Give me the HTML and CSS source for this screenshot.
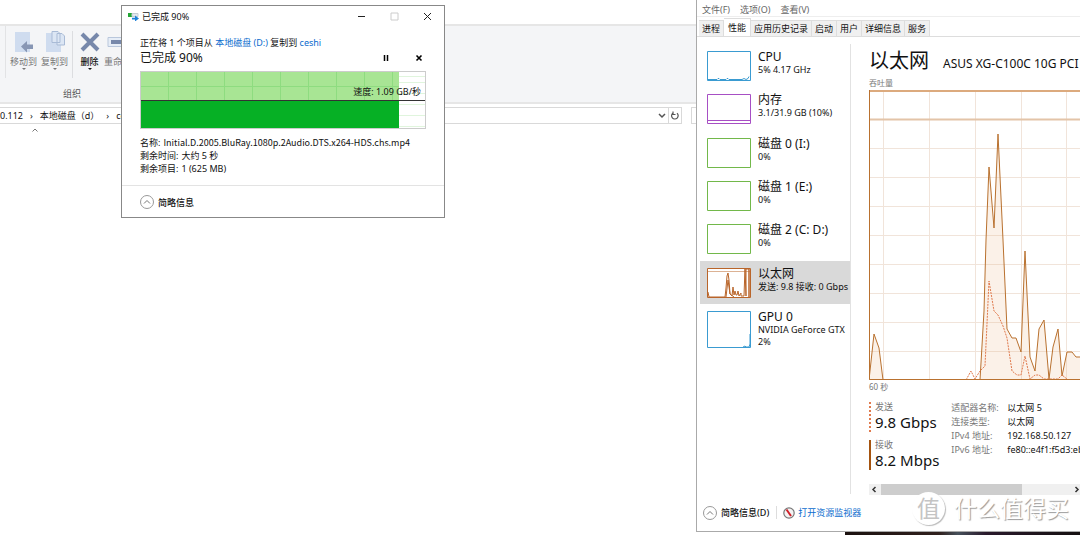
FILE: index.html
```html
<!DOCTYPE html>
<html lang="zh-CN">
<head>
<meta charset="utf-8">
<title>文件复制</title>
<link rel="stylesheet" href="styles.css">
</head>
<body>
<main class="desktop">
  <section class="explorer">
    <div class="ribbon">
      <div class="ribbon-tools">
        <button class="tool faded">
          <svg width="22" height="22" viewBox="0 0 22 22"><path d="M2 1h15v20H2z" fill="#cfdcef"/><path d="M8 15.500l6-5.500v3.500h6v4.500h-6v3.500z" fill="#8796b4"/></svg>
          <span>移动到</span><i class="caret"></i>
        </button>
        <button class="tool faded">
          <svg width="22" height="22" viewBox="0 0 22 22"><path d="M2 2h15v19H2z" fill="#cfdcef"/><path d="M8 .500h6l2 2v9H8zM13 2.500h5l2.500 2.500v9H13z" fill="#dce6f4" stroke="#a9bbd6"/></svg>
          <span>复制到</span><i class="caret"></i>
        </button>
        <button class="tool delete">
          <svg width="22" height="22" viewBox="0 0 22 22"><path d="M3 3l16 16M19 3L3 19" stroke="#7788ab" stroke-width="4"/></svg>
          <span>删除</span><i class="caret"></i>
        </button>
        <button class="tool faded rename">
          <svg width="22" height="22" viewBox="0 0 22 22"><path d="M1 6.500h20v9H1z" fill="#e6edf7" stroke="#b9c7dc"/><path d="M4 9h15v4H4z" fill="#7788ab"/></svg>
          <span>重命名</span>
        </button>
      </div>
      <div class="ribbon-title">组织</div>
    </div>
    <div class="address-row">
      <nav class="address">
        <span>0.112</span><span class="sep">›</span><span>本地磁盘（d）</span><span class="sep">›</span><span>ceshi</span>
        <button class="drop" aria-label="展开"><svg width="8" height="6" viewBox="0 0 8 6"><path d="M1 1l3 3 3-3" fill="none" stroke="#555" stroke-width="1.500"/></svg></button>
        <button class="refresh" aria-label="刷新"><svg width="10" height="10" viewBox="0 0 10 10"><path d="M7 2.200A3.300 3.300 0 1 1 3 2M3 .500V3.500H5.500" fill="none" stroke="#555" stroke-width="1.200"/></svg></button>
      </nav>
      <div class="search"></div>
    </div>
    <svg class="sort" width="6" height="4" viewBox="0 0 6 4"><path d="M.500 3.500L3 1l2.500 2.500" fill="none" stroke="#777"/></svg>
  </section>

  <section class="copy">
    <header class="copy-head">
      <svg width="12" height="8" viewBox="0 0 12 8"><path d="M0 0h4v4H0z" fill="#24a635"/><path d="M4 .500h6v3H4z" fill="#e4e8ec" stroke="#c5ccd4"/><path d="M4 4.800h3V2.500l4 3-4 3V6.500H4z" fill="#1f82d8"/></svg>
      <h2>已完成 90%</h2>
      <button aria-label="最小化"><svg width="9" height="9" viewBox="0 0 9 9"><path d="M1 4.500h7" stroke="#222"/></svg></button>
      <button aria-label="最大化"><svg width="9" height="9" viewBox="0 0 9 9"><path d="M1 1h7v7H1z" fill="none" stroke="#ccc"/></svg></button>
      <button aria-label="关闭"><svg width="9" height="9" viewBox="0 0 9 9"><path d="M1 1l7 7M8 1L1 8" stroke="#222"/></svg></button>
    </header>
    <div class="copy-body">
      <p class="route">正在将 1 个项目从 <a href="#">本地磁盘 (D:)</a> 复制到 <a href="#">ceshi</a></p>
      <div class="progress-row">
        <span>已完成 90%</span>
        <button aria-label="暂停"><svg width="8" height="8" viewBox="0 0 8 8"><path d="M2.500 1v6M5.500 1v6" stroke="#000" stroke-width="1.500"/></svg></button>
        <button aria-label="取消"><svg width="8" height="8" viewBox="0 0 8 8"><path d="M1.500 1.500l5 5M6.500 1.500l-5 5" stroke="#000" stroke-width="1.600"/></svg></button>
      </div>
      <div class="speed">
        <div class="speed-done"></div>
        <span>速度: 1.09 GB/秒</span>
      </div>
      <dl class="facts">
        <div><dt>名称:</dt><dd class="filename">Initial.D.2005.BluRay.1080p.2Audio.DTS.x264-HDS.chs.mp4</dd></div>
        <div><dt>剩余时间:</dt><dd>大约 5 秒</dd></div>
        <div><dt>剩余项目:</dt><dd>1 (625 MB)</dd></div>
      </dl>
    </div>
    <footer class="copy-foot">
      <button class="less"><svg width="14" height="14" viewBox="0 0 14 14"><circle cx="7" cy="7" r="6.500" fill="#fff" stroke="#999"/><path d="M4 8.500l3-3 3 3" fill="none" stroke="#777"/></svg>简略信息</button>
    </footer>
  </section>

  <section class="taskmgr">
    <nav class="menu"><button>文件(F)</button><button>选项(O)</button><button>查看(V)</button></nav>
    <div class="tabs" role="tablist">
      <button role="tab">进程</button><button role="tab" class="active" aria-selected="true">性能</button><button role="tab">应用历史记录</button><button role="tab">启动</button><button role="tab">用户</button><button role="tab">详细信息</button><button role="tab">服务</button>
    </div>
    <div class="panes">
      <div class="devices">
        <div class="device-list">
          <button class="device"><svg class="thumb blue" viewBox="0 0 44 30"><path d="M.500.500h43v29H.500z" class="frame"/><path d="M1 28.500h9l1-1h1l1 1h6l1-1h1l1 1h13l2-1 2 1 2-1 1-2" class="line"/></svg><span class="info"><b>CPU</b><small>5% 4.17 GHz</small></span></button>
          <button class="device"><svg class="thumb purple" viewBox="0 0 44 30"><path d="M.500.500h43v29H.500z" class="frame"/><path d="M1 26.500h42" class="line"/></svg><span class="info"><b>内存</b><small>3.1/31.9 GB (10%)</small></span></button>
          <button class="device"><svg class="thumb green" viewBox="0 0 44 30"><path d="M.500.500h43v29H.500z" class="frame"/></svg><span class="info"><b>磁盘 0 (I:)</b><small>0%</small></span></button>
          <button class="device"><svg class="thumb green" viewBox="0 0 44 30"><path d="M.500.500h43v29H.500z" class="frame"/></svg><span class="info"><b>磁盘 1 (E:)</b><small>0%</small></span></button>
          <button class="device"><svg class="thumb green" viewBox="0 0 44 30"><path d="M.500.500h43v29H.500z" class="frame"/></svg><span class="info"><b>磁盘 2 (C: D:)</b><small>0%</small></span></button>
          <button class="device selected"><svg class="thumb orange" viewBox="0 0 44 30"><path d="M.500.500h43v29H.500z" class="frame"/><path d="M1 24l1 5h16l1-9 1-12 1-3 1 7 1 14 2 2 1-9 1 8 1-4 1 4h1l1-4 1 5 2-3v3h3l1-28 1 28V1h3v28V1" class="line"/><path d="M19 29l2-17 2 14 4 3" class="line"/><path d="M1 3.500h42" class="line soft"/></svg><span class="info"><b>以太网</b><small>发送: 9.8 接收: 0 Gbps</small></span></button>
        </div>
        <button class="device"><svg class="thumb blue tall" viewBox="0 0 44 37"><path d="M.500.500h43v36H.500z" class="frame"/><path d="M36 36l2-1 1 1h3l1-3V23" class="line"/></svg><span class="info"><b>GPU 0</b><small>NVIDIA GeForce GTX</small><small>2%</small></span></button>
      </div>
      <div class="detail">
        <header class="detail-head"><h1>以太网</h1><span>ASUS XG-C100C 10G PCI</span></header>
        <div class="axis">吞吐量</div>
        <svg class="chart">
          <path d="M14.500 1V290M60.500 1V290M106.500 1V290M152.500 1V290M197.500 1V290M0 58.500H400M0 87.500H400M0 116.500H400M0 145.500H400M0 174.500H400M0 203.500H400M0 232.500H400M0 261.500H400" class="grid"/>
          <path d="M0 29.500H400" class="grid strong"/>
          <path d="M0 290L5 244 10 258 14 290H111L115 221 117 150 120 77 125 138 129 44 134 150 138 239 143 248H147L152 262 156 161 161 267 166 281 170 239 175 230 180 289 184 257 189 239 193 286 198 262H203L207 267H400V290" class="receive"/>
          <path d="M97 290L102 281 106 289 111 281 116 276 120 191 125 221 129 225 134 236 138 248 143 281 148 285H152L156 266 161 289 166 285H170L175 289H189L193 285 198 289" class="send"/>
          <path d="M0 1H400" class="top"/><path d="M.500 0V289.500H400" class="edge"/>
        </svg>
        <div class="axis">60 秒</div>
        <div class="stats">
          <div class="rates">
            <div class="rate dashed"><span>发送</span><strong>9.8 Gbps</strong></div>
            <div class="rate"><span>接收</span><strong>8.2 Mbps</strong></div>
          </div>
          <table class="props">
            <tr><th>适配器名称:</th><td>以太网 5</td></tr>
            <tr><th>连接类型:</th><td>以太网</td></tr>
            <tr><th>IPv4 地址:</th><td>192.168.50.127</td></tr>
            <tr><th>IPv6 地址:</th><td>fe80::e4f1:f5d3:eb</td></tr>
          </table>
        </div>
        <div class="scroll">
          <button aria-label="向左"><svg width="6" height="7" viewBox="0 0 6 7"><path d="M4.500 1L2 3.500 4.500 6" fill="none" stroke="#333" stroke-width="1.500"/></svg></button>
          <div class="track"><div class="handle"></div></div>
          <button aria-label="向右"><svg width="6" height="7" viewBox="0 0 6 7"><path d="M1.500 1L4 3.500 1.500 6" fill="none" stroke="#333" stroke-width="1.500"/></svg></button>
        </div>
      </div>
    </div>
    <footer class="tm-foot">
      <button class="less"><svg width="14" height="14" viewBox="0 0 14 14"><circle cx="7" cy="7" r="6.500" fill="#fff" stroke="#999"/><path d="M4 8.500l3-3 3 3" fill="none" stroke="#777"/></svg>简略信息(D)</button>
      <a class="monitor" href="#"><svg width="12" height="12" viewBox="0 0 12 12"><circle cx="6" cy="6" r="5.200" fill="#f3f3f3" stroke="#777" stroke-width="1.200"/><path d="M3.500 2.500L8 9" stroke="#d0202a" stroke-width="2"/></svg>打开资源监视器</a>
    </footer>
  </section>
  <div class="wallpaper"></div>
  <div class="watermark"><span class="mark">值</span><span>什么值得买</span></div>
</main>
</body>
</html>
```
FILE: styles.css
```css
* { box-sizing: border-box; }
body, h1, h2, p, dl, dd { margin: 0; }
body {
  font: 9px/13px "Noto Sans", "Noto Sans CJK SC", sans-serif;
  color: #111;
  background: #fff;
}
button {
  font: inherit;
  color: inherit;
  background: none;
  border: 0;
  padding: 0;
}
svg { display: block; flex: none; }
a { color: #0b6cce; text-decoration: none; }
.desktop { position: relative; height: 100vh; overflow: hidden; }

.explorer { padding-top: 24px; }
.ribbon {
  height: 80px;
  background: #f4f5f7;
  border: solid #e6e6e6;
  border-width: 2px 0;
}
.ribbon-tools {
  display: flex;
  height: 52px;
  margin-left: 5px;
  border-left: 1px solid #e2e3e5;
  padding: 5px 0 0 2px;
}
.tool {
  display: flex;
  flex-direction: column;
  align-items: center;
  width: 31px;
  white-space: nowrap;
}
.faded { color: #777; }
.tool span { margin-top: 2px; }
.delete { margin-left: 2px; width: 34px; border-left: 1px solid #dcdde0; font-weight: 500; }
.rename { width: 23px; }
.caret {
  border: 2px solid transparent;
  border-top-color: currentColor;
}
.ribbon-title { width: 144px; text-align: center; padding-top: 9px; color: #555; }
.address-row { display: flex; padding-top: 3px; }
.address {
  display: flex;
  align-items: center;
  width: 682px;
  height: 17px;
  border: 1px solid #d9d9d9;
  border-left: 0;
}
.sep { padding: 0 7px; }
.drop { margin-left: auto; padding-right: 2px; }
.refresh { border-left: 1px solid #d9d9d9; padding: 3px 1px; }
.search { width: 60px; margin-left: 9px; border: 1px solid #d9d9d9; }
.sort { margin: 4px 0 0 32px; }

.copy {
  position: absolute;
  left: 121px;
  top: 5px;
  width: 324px;
  background: #fff;
  border: 1px solid #888;
}
.copy-head { display: flex; align-items: center; padding: 4px 12px 3px 6px; }
.copy-head h2 { flex: 1; font-size: 9px; font-weight: 400; margin-left: 2px; }
.copy-head button { margin-left: 24px; }
.copy-body { padding: 10px 18px; }
.progress-row { display: flex; align-items: center; font-size: 12px; line-height: 18px; }
.progress-row span { flex: 1; }
.progress-row button { margin-left: 25px; }
.progress-row button:last-child { margin-right: 3px; }
.speed {
  position: relative;
  height: 58px;
  margin-top: 4px;
  border: 1px solid #ccc;
  background: linear-gradient(#e0f5dd, #e0f5dd) 0 4px / 100% 1px no-repeat,
    repeating-linear-gradient(transparent 0 10px, #e0f5dd 10px 11px);
}
.speed-done {
  width: 91%;
  height: 100%;
  background: linear-gradient(transparent 28px, #06b025 28px),
    repeating-linear-gradient(90deg, transparent 0 27px, #8edc80 27px 28px),
    repeating-linear-gradient(transparent 0 14px, #8edc80 14px 15px), #a8e594;
}
.speed::after {
  content: "";
  position: absolute;
  inset: 28px 0 auto;
  height: 1px;
  background: #333;
}
.speed span { position: absolute; right: 4px; top: 13px; }
.facts { margin-top: 7px; }
.facts div { display: flex; gap: 3px; }
.filename { font-family: "Noto Sans CJK SC", sans-serif; }
.copy-foot { border-top: 1px solid #e3e3e3; padding: 9px 18px 8px; }
.less { display: flex; align-items: center; gap: 4px; font-weight: 500; }

.taskmgr {
  position: absolute;
  left: 696px;
  right: 0;
  top: 0;
  background: #fff;
  border: solid #aaa;
  border-width: 0 0 1px 1px;
  overflow: hidden;
}
.menu { display: flex; gap: 10px; padding: 3px 5px 0; height: 17px; color: #666; border-bottom: 1px solid #eee; }
.tabs { display: flex; align-items: flex-end; height: 20px; padding-left: 2px; border-bottom: 1px solid #ddd; }
.tabs button {
  height: 16px;
  padding: 0 3px;
  background: #f0f0f0;
  border: solid #ddd;
  border-width: 1px 1px 0 0;
}
.tabs .active { height: 18px; padding: 0 4px; background: #fff; }
.panes { display: flex; height: 457px; padding-top: 7px; }
.devices {
  width: 154px;
  padding-left: 3px;
  border-right: 1px solid #e2e2e2;
  flex: none;
  overflow: hidden;
}
.device-list { display: grid; grid-template-rows: repeat(6, 1fr); height: 260px; }
.device {
  display: flex;
  gap: 7px;
  width: 150px;
  padding: 7px 0 0 7px;
  text-align: left;
  white-space: nowrap;
  overflow: hidden;
}
.selected { background: #d9d9d9; }
.thumb { width: 44px; height: 30px; fill: none; stroke-width: 1; }
.tall { height: 37px; }
.frame { fill: #fff; stroke: currentColor; }
.line { stroke: currentColor; }
.soft { opacity: .5; }
.blue { color: #3a9bd1; }
.purple { color: #a74fc4; }
.green { color: #72b84a; }
.orange { color: #b9652a; }
.info { display: flex; flex-direction: column; margin-top: -2px; }
.info b { font-size: 12px; line-height: 15px; font-weight: 400; }
.info small { font-size: 9px; line-height: 12px; }
.detail { flex: 1; min-width: 0; padding-left: 18px; white-space: nowrap; }
.detail-head { display: flex; align-items: baseline; gap: 14px; height: 32px; }
.detail-head h1 { font-size: 20px; line-height: 34px; font-weight: 400; }
.detail-head span { font-size: 12px; }
.axis { font-size: 8px; line-height: 14px; color: #777; }
.chart { width: 100%; height: 290px; overflow: hidden; }
.chart path { fill: none; }
.chart .grid { stroke: #f1e4da; }
.chart .strong { stroke: #e3c4a8; stroke-width: 2; }
.chart .receive { stroke: #b9712f; fill: #ecb88a; fill-opacity: .2; }
.chart .send { stroke: #e07a4d; stroke-dasharray: 2 1; }
.chart .top { stroke: #dcaa7e; stroke-width: 2; }
.chart .edge { stroke: #b9712f; }
.stats { display: flex; gap: 12px; padding-top: 8px; }
.rates { display: grid; gap: 8px; width: 71px; }
.rate { display: grid; padding-left: 4px; border-left: 2px solid #a5540f; height: 30px; color: #777; line-height: 10px; }
.dashed { border-left-style: dotted; border-left-color: #e07a4d; }
.rate strong { font-size: 15px; line-height: 20px; font-weight: 400; color: #111; }
.props { border-collapse: collapse; line-height: 14px; margin-top: -1px; align-self: start; }
.props th { min-width: 56px; padding: 0 8px 0 0; font-weight: 400; text-align: left; color: #777; }
.props td { padding: 0; }
.scroll { display: flex; height: 11px; margin-top: 14px; background: #f0f0f0; }
.scroll button { width: 12px; padding-left: 2px; }
.scroll button:last-child { width: 8px; padding-left: 2px; }
.track { flex: 1; }
.handle { width: 74%; height: 100%; background: #cdcdcd; }
.tm-foot { display: flex; align-items: center; height: 37px; padding: 3px 6px; }
.monitor { display: flex; align-items: center; gap: 3px; margin-left: 7px; padding-left: 6px; border-left: 1px solid #ddd; }
.wallpaper {
  position: absolute;
  left: 845px;
  right: 0;
  bottom: 0;
  height: 3px;
  background: linear-gradient(90deg, #1c1210, #30201d 40%, #46505a 48%, #2a1a2c 60%, #151010);
}
.watermark {
  position: absolute;
  right: 11px;
  bottom: 10px;
  display: flex;
  align-items: center;
  gap: 9px;
  font-size: 23px;
  line-height: 33px;
  color: #fff;
  text-shadow: 1px 1px 1px #999;
}
.mark {
  width: 33px;
  border-radius: 50%;
  text-align: center;
  background: #fff;
  color: #c4c4c4;
  text-shadow: none;
  box-shadow: 1px 1px 1px #bbb;
}
```
